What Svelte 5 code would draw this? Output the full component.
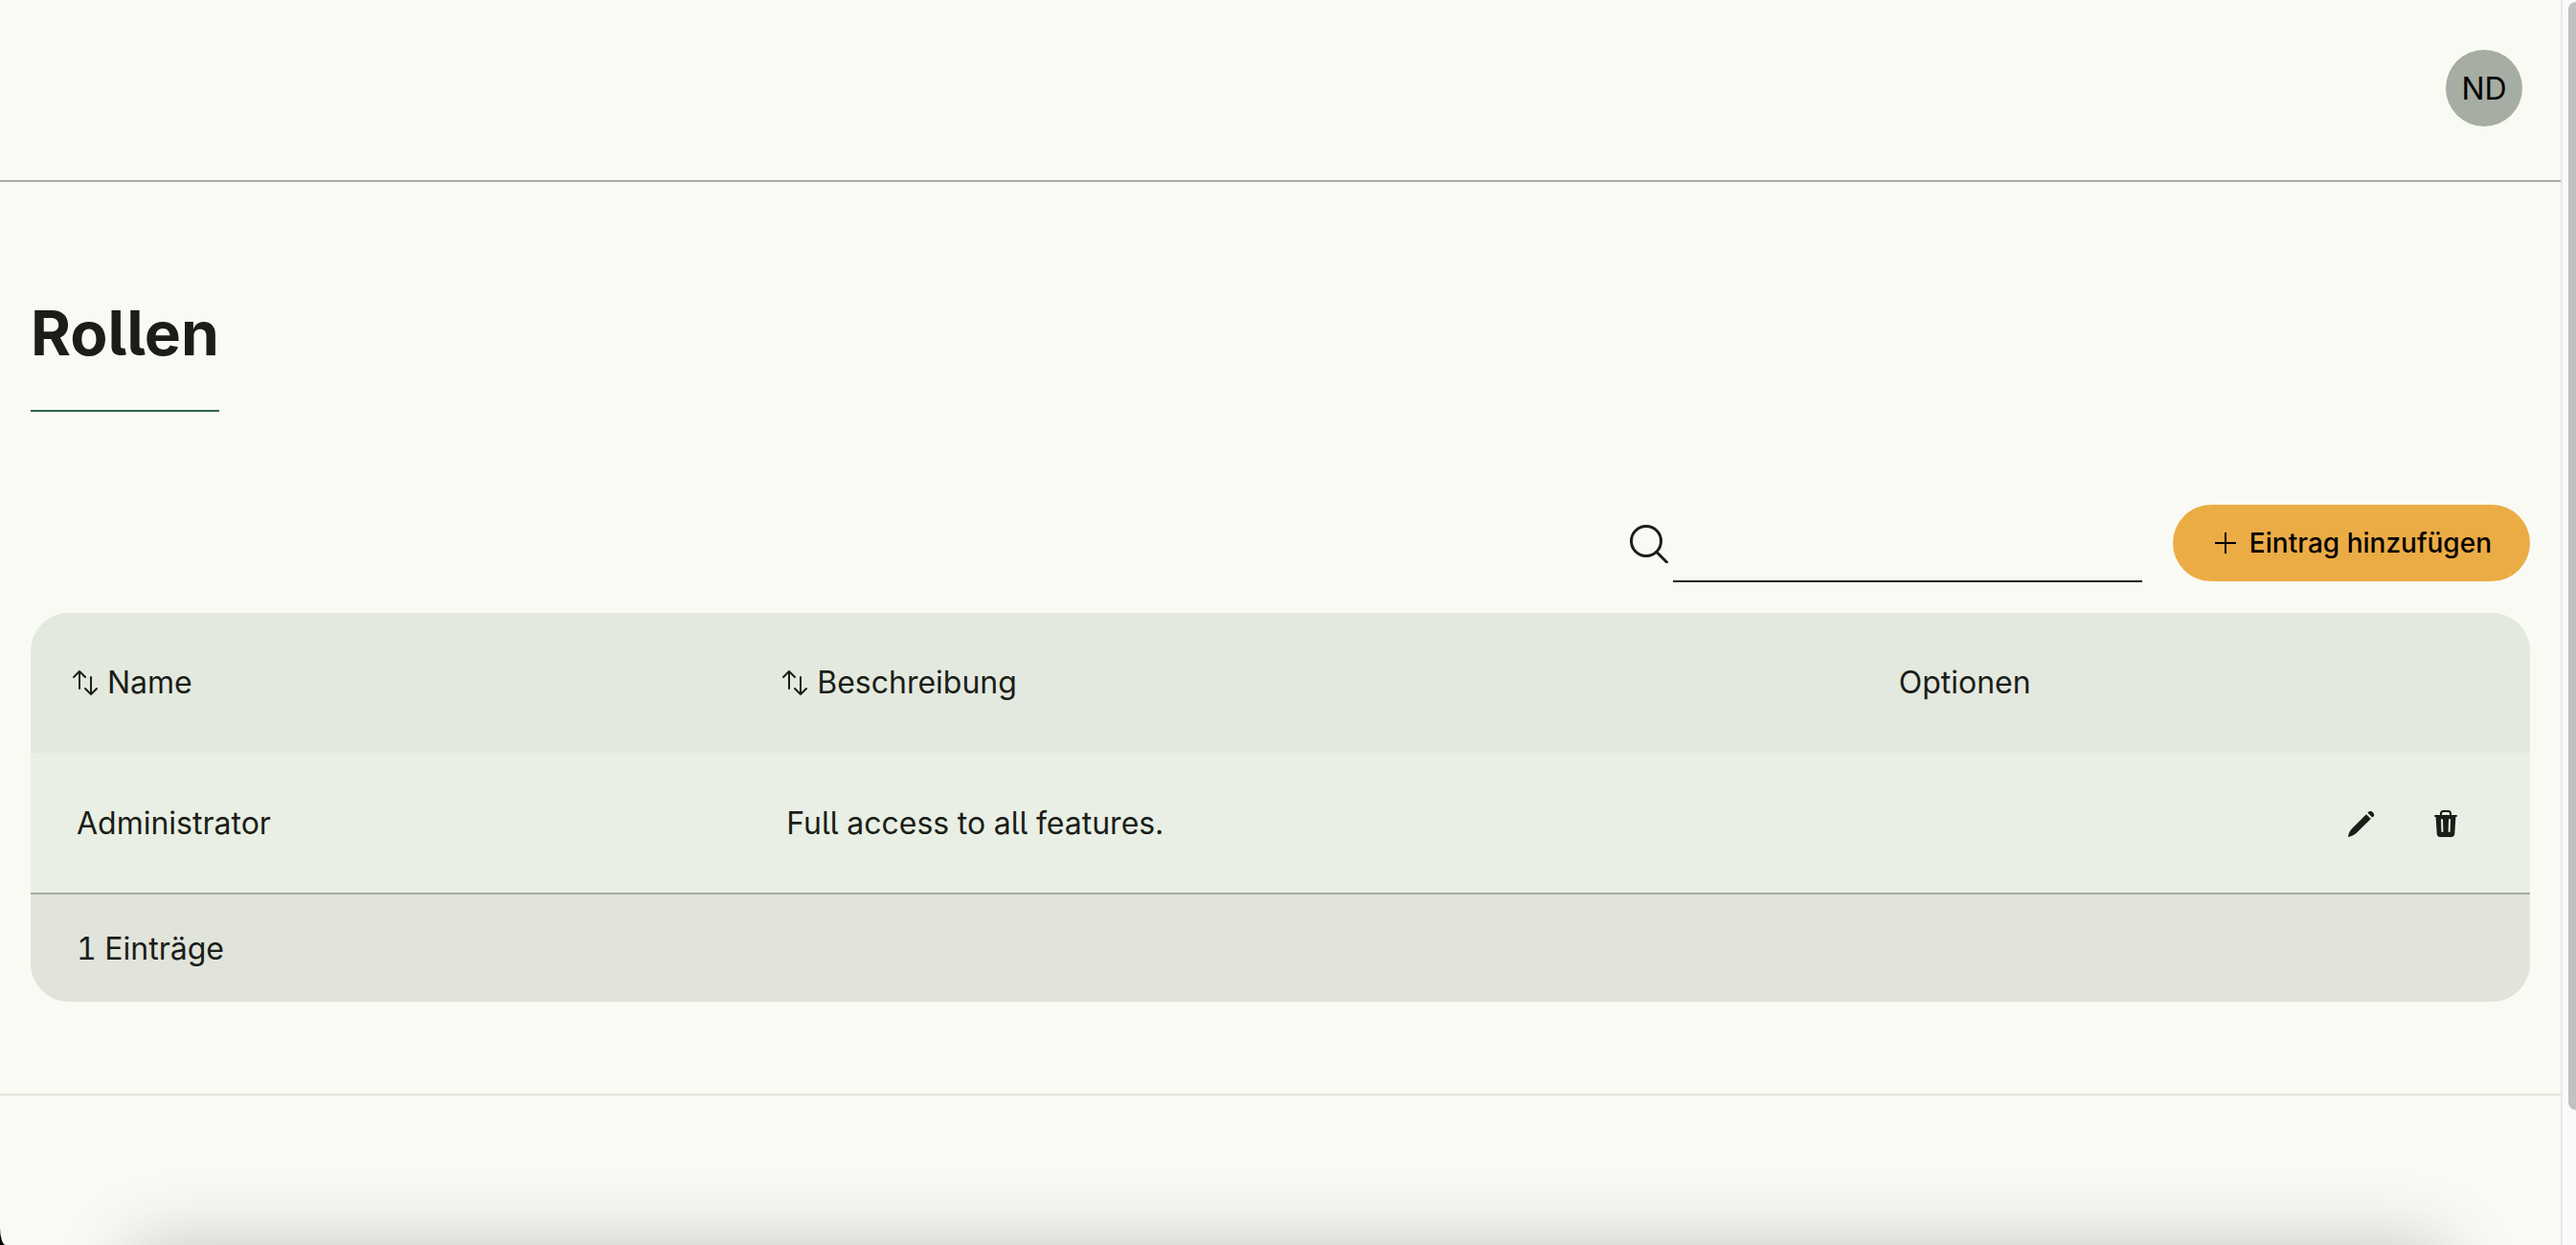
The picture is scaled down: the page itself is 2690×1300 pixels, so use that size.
<script lang="ts">
  type Role = { name: string; description: string };

  const roles: Role[] = [{ name: 'Administrator', description: 'Full access to all features.' }];

  let query = $state('');
  let sortKey = $state<keyof Role>('name');
  let ascending = $state(true);

  const visible = $derived(
    roles
      .filter((role) => (role.name + role.description).toLowerCase().includes(query.toLowerCase()))
      .sort((a, b) => a[sortKey].localeCompare(b[sortKey]) * (ascending ? 1 : -1))
  );

  function sortBy(key: keyof Role) {
    ascending = key === sortKey ? !ascending : true;
    sortKey = key;
  }
</script>

{#snippet sortIcon()}
  <svg class="sort-icon" viewBox="0 0 26 26" aria-hidden="true">
    <path d="M7 19V1M1 7l6-6 6 6M19 7v18M13 19l6 6 6-6" />
  </svg>
{/snippet}

<div class="window">
  <div class="page">
    <header class="topbar">
      <button class="avatar" type="button">ND</button>
    </header>

    <main>
      <h1>Rollen</h1>

      <div class="toolbar">
        <label class="search">
          <svg viewBox="0 0 40 40" aria-hidden="true">
            <circle cx="17" cy="17" r="15.5" />
            <path d="M28 28.5 38.500 39" />
          </svg>
          <input type="text" aria-label="Suche" bind:value={query} />
        </label>
        <button class="add" type="button">
          <svg viewBox="0 0 22 22" aria-hidden="true"><path d="M11 0v22M0 11h22" /></svg>
          Eintrag hinzufügen
        </button>
      </div>

      <table>
        <colgroup>
          <col class="col-name" />
          <col class="col-description" />
          <col />
        </colgroup>
        <thead>
          <tr>
            <th><button type="button" onclick={() => sortBy('name')}>{@render sortIcon()}Name</button></th>
            <th><button type="button" onclick={() => sortBy('description')}>{@render sortIcon()}Beschreibung</button></th>
            <th>Optionen</th>
          </tr>
        </thead>
        <tbody>
          {#each visible as role (role.name)}
            <tr>
              <td>{role.name}</td>
              <td>{role.description}</td>
              <td>
                <div class="actions">
                  <button type="button" aria-label="Bearbeiten">
                    <svg viewBox="0 0 28 28" aria-hidden="true">
                      <path d="M19 4.200 23.800 9 9 23.600C7 25.600 3.500 27.500.3 28c-.3 0-.4-.2-.3-.5C.5 24.300 2.200 21 4.200 19ZM20.400 2.800l1.500-1.500a4 4 0 0 1 5 5l-1.700 1.300Z" />
                    </svg>
                  </button>
                  <button type="button" aria-label="Löschen">
                    <svg viewBox="0 0 28 28" aria-hidden="true">
                      <path fill-rule="evenodd" d="M3 5h5V3.500A3.500 3.500 0 0 1 11.500 0h5A3.500 3.500 0 0 1 20 3.500V5h5a1 1 0 0 1 0 2h-.6L23.300 24.500A3.700 3.700 0 0 1 19.600 28H8.400a3.700 3.700 0 0 1-3.700-3.500L3.600 7H3a1 1 0 0 1 0-2ZM10 5h8V3.500Q18 2 16.500 2h-5Q10 2 10 3.500ZM9 10l.4 12a1 1 0 0 0 2 0L11 10a1 1 0 0 0-2 0Zm8 0-.4 12a1 1 0 0 0 2 0L19 10a1 1 0 0 0-2 0Z" />
                    </svg>
                  </button>
                </div>
              </td>
            </tr>
          {/each}
        </tbody>
        <tfoot>
          <tr><td colspan="3">{visible.length} Einträge</td></tr>
        </tfoot>
      </table>
    </main>

    <div class="lower"></div>
  </div>

  <div class="scroll-track"><div class="scroll-thumb"></div></div>
  <div class="dock"></div>
</div>

<style>
  :global(body) {
    background: #000;
  }

  .window {
    position: relative;
    display: flex;
    min-height: 100vh;
    overflow: hidden;
    border-bottom-left-radius: 6px 18px;
    background: #f9faf4;
    color: #1a1d18;
    font: 400 32px/48px Inter, sans-serif;
    font-feature-settings: 'cv05', 'tnum';
  }

  .page {
    flex: 1;
    display: flex;
    flex-direction: column;
  }

  button {
    padding: 0;
    border: 0;
    background: none;
    color: inherit;
    font: inherit;
    font-feature-settings: inherit;
    cursor: pointer;
  }

  .topbar {
    display: flex;
    justify-content: flex-end;
    padding: 52px 40px 56px;
    border-bottom: 2px solid #a6ada2;
  }

  .avatar {
    width: 80px;
    height: 80px;
    padding-top: 2px;
    border-radius: 50%;
    background: #a6ada2;
    color: #000;
  }

  main {
    padding: 118px 32px 96px;
  }

  h1 {
    width: fit-content;
    margin: 0 0 97px;
    padding-bottom: 40px;
    border-bottom: 2px solid #2c654c;
    font-size: 64px;
    line-height: 80px;
    font-weight: 700;
    font-variation-settings: 'opsz' 32;
  }

  .toolbar {
    display: flex;
    justify-content: flex-end;
    gap: 32px;
    margin-bottom: 32px;
  }

  .search {
    display: flex;
    align-items: center;
    gap: 5px;
  }

  .search svg {
    width: 40px;
    height: 40px;
    fill: none;
    stroke: #1a1d18;
    stroke-width: 3;
    stroke-linecap: round;
  }

  .search input {
    box-sizing: border-box;
    width: 490px;
    height: 81px;
    padding: 0 8px;
    border: 0;
    border-bottom: 2px solid #1a1d18;
    background: none;
    color: inherit;
    font: inherit;
    outline: 0;
  }

  .add {
    display: flex;
    align-items: center;
    gap: 14px;
    height: 80px;
    padding: 0 40px 0 44px;
    border-radius: 40px;
    background: #ecac45;
    color: #000;
    font-size: 28px;
    font-weight: 500;
  }

  .add svg {
    width: 22px;
    height: 22px;
    fill: none;
    stroke: currentColor;
    stroke-width: 2;
  }

  table {
    width: 100%;
    table-layout: fixed;
    border-collapse: separate;
    border-spacing: 0;
    border-radius: 40px;
    overflow: hidden;
    background: #e9efe4;
  }

  .col-name {
    width: 28.400%;
  }

  .col-description {
    width: 44.500%;
  }

  th,
  td {
    box-sizing: border-box;
    height: 146px;
    padding: 0 48px;
    text-align: left;
    font-weight: 400;
  }

  th {
    background: #e4e9df;
  }

  td {
    padding-top: 2px;
  }

  th button {
    display: flex;
    align-items: center;
    gap: 10px;
    margin-left: -4px;
  }

  .sort-icon {
    width: 26px;
    height: 26px;
    fill: none;
    stroke: currentColor;
    stroke-width: 2;
    stroke-linecap: round;
    stroke-linejoin: round;
    overflow: visible;
  }

  .actions {
    display: flex;
    justify-content: flex-end;
    gap: 60px;
    padding-right: 26px;
  }

  .actions svg {
    display: block;
    width: 28px;
    height: 28px;
    fill: currentColor;
  }

  tfoot td {
    height: 114px;
    border-top: 2px solid #a6ada2;
    background: #e1e4da;
  }

  .lower {
    flex: 1;
    border-top: 2px solid #e1e4da;
  }

  .scroll-track {
    box-sizing: border-box;
    width: 16px;
    padding: 2px 0 0 6px;
    border-left: 2px solid #e8e8e8;
    background: #fafafa;
  }

  .scroll-thumb {
    height: 89vh;
    border-radius: 8px 0 0 8px;
    background: #c1c1c1;
  }

  /* Shadow cast upwards by the panel docked below the window edge */
  .dock {
    position: absolute;
    right: 140px;
    bottom: -84px;
    left: 140px;
    height: 80px;
    box-shadow: 0 0 80px rgb(0 0 0 / 24%);
    pointer-events: none;
  }
</style>
